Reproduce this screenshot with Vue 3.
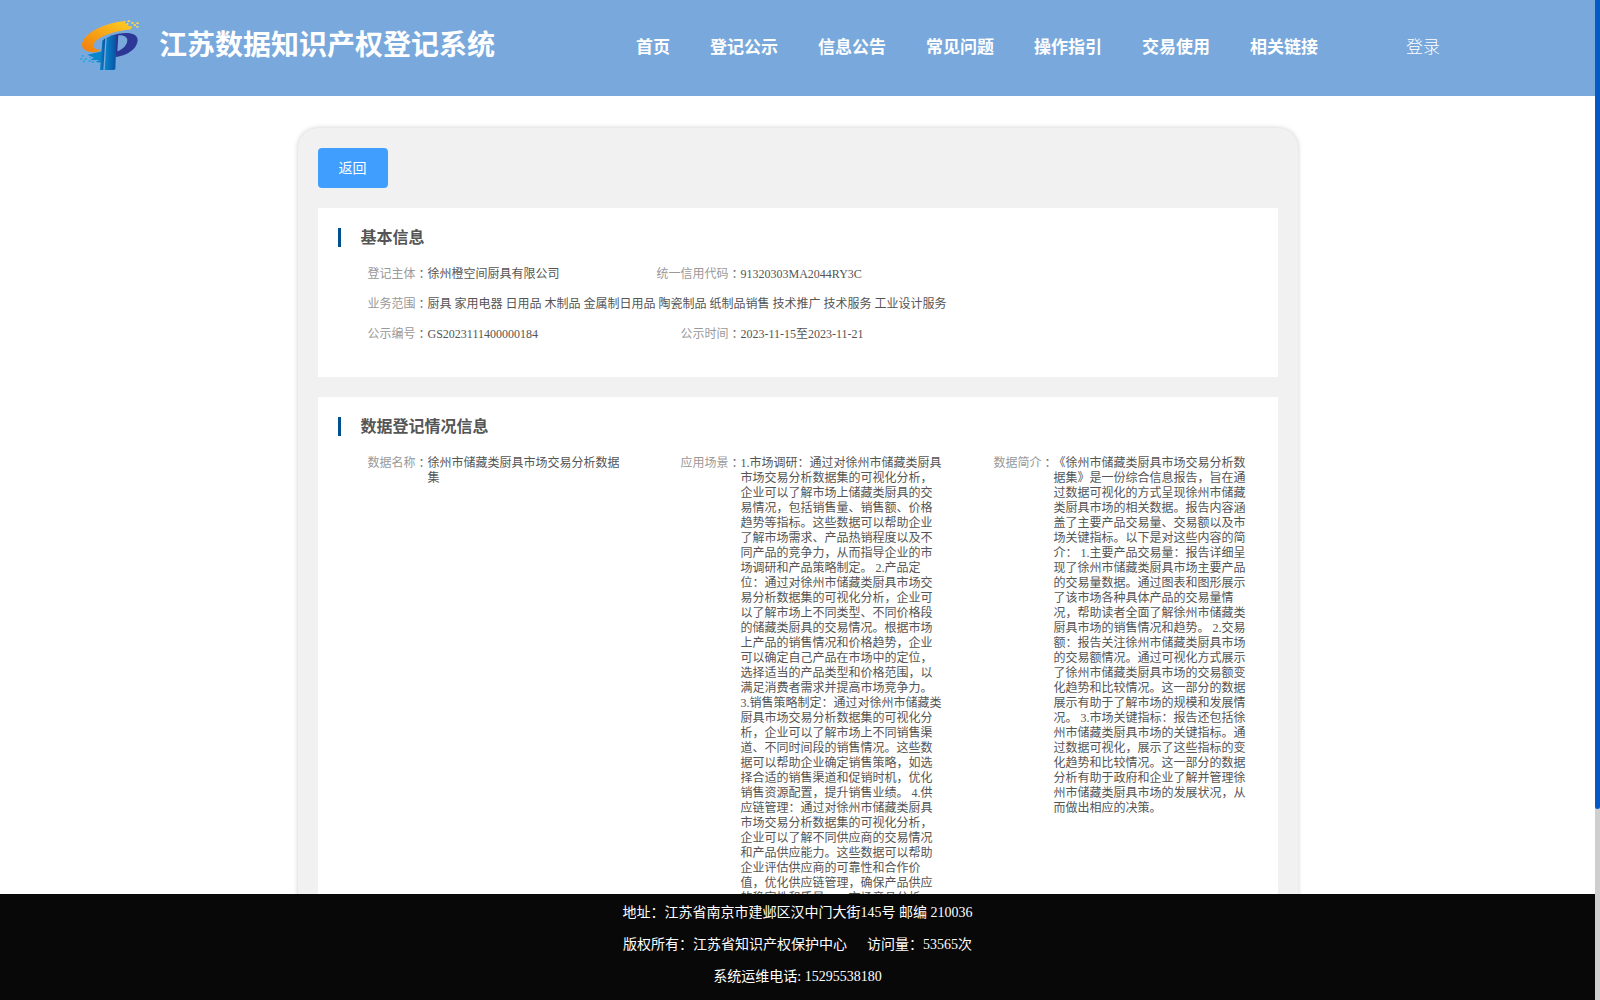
<template>
  <div class="page">
    <div class="view">
      <header class="header">
        <svg class="logo" viewBox="0 0 240 210">
          <defs>
            <linearGradient id="orange" x1="0" y1="1" x2="1" y2="0">
              <stop offset="0" stop-color="#f07c0c" />
              <stop offset="1" stop-color="#ffd024" />
            </linearGradient>
            <linearGradient id="blue" x1="0" y1="0" x2="1" y2="0">
              <stop offset="0" stop-color="#0a86cc" />
              <stop offset="1" stop-color="#0850a0" />
            </linearGradient>
          </defs>
          <path d="M166 33 C105 38 36 70 36 106 C37 122 60 130 84 125 L93 119 C76 121 68 112 72 102 C79 82 125 65 182 58 L188 50 L174 47 Z" fill="url(#orange)" />
          <path d="M52 134 L97 124 L97 158 L76 156 L88 150 L60 150 L72 143 Z" fill="#0a86cc" />
          <path d="M97 92 L106 84 L100 180 L90 180 Z" fill="url(#blue)" />
          <path d="M110 83 Q122 76 140 74 L136 176 Q135 180 130 180 L104 180 Z" fill="url(#blue)" />
          <path d="M120 78 C165 62 203 67 203 90 C202 118 168 138 137 141 L138 76 Z M145 76 L142 124 C160 118 172 104 172 90 C172 80 160 75 145 76 Z" fill="#2c3796" fill-rule="evenodd" />
          <path d="M173 31h7v5h-7z M184 36h7v5h-7z M191 43h7v5h-7z M199 37h7v5h-7z M168 39h7v5h-7z M199 48h6v5h-6z" fill="#ffd83c" />
          <path d="M166 37h5v4h-5z M180 42h5v4h-5z M190 34h4v3h-4z" fill="#79a9dc" />
          <path d="M35 135h6v5h-6z M31 145h6v5h-6z M44 145h7v5h-7z M39 152h6v5h-6z M55 151h7v5h-7z M65 153h7v5h-7z M58 140h6v4h-6z" fill="#2ba5e3" />
        </svg>
        <h1 class="site-name">江苏数据知识产权登记系统</h1>
        <nav class="nav">
          <a v-for="item in menus" :key="item" class="nav-item">{{ item }}</a>
        </nav>
        <a class="login">登录</a>
      </header>

      <main class="main">
        <div class="card">
          <button class="back">返回</button>
          <section v-for="section in sections" :key="section.title" class="section">
            <h2 class="section-title">{{ section.title }}</h2>
            <div class="fields">
              <div v-for="field in section.fields" :key="field.label" class="field" :class="field.size">
                <span class="label">{{ field.label }}<span class="colon">：</span></span>
                <span class="value">{{ field.value }}</span>
              </div>
            </div>
          </section>
        </div>
      </main>

      <footer class="footer">
        <p>地址：江苏省南京市建邺区汉中门大街145号 邮编 210036</p>
        <p>版权所有：江苏省知识产权保护中心<span class="visits">访问量：53565次</span></p>
        <p>系统运维电话: 15295538180</p>
      </footer>
    </div>
    <div class="scrollbar"><div class="thumb"></div></div>
  </div>
</template>

<script setup>
const menus = ['首页', '登记公示', '信息公告', '常见问题', '操作指引', '交易使用', '相关链接']

const sections = [
  {
    title: '基本信息',
    fields: [
      { label: '登记主体', value: '徐州橙空间厨具有限公司' },
      { label: '统一信用代码', value: '91320303MA2044RY3C', size: 'double' },
      { label: '业务范围', value: '厨具 家用电器 日用品 木制品 金属制日用品 陶瓷制品 纸制品销售 技术推广 技术服务 工业设计服务', size: 'full' },
      { label: '公示编号', value: 'GS2023111400000184' },
      { label: '公示时间', value: '2023-11-15至2023-11-21' }
    ]
  },
  {
    title: '数据登记情况信息',
    fields: [
      { label: '数据名称', value: '徐州市储藏类厨具市场交易分析数据集' },
      {
        label: '应用场景',
        value: '1.市场调研：通过对徐州市储藏类厨具市场交易分析数据集的可视化分析，企业可以了解市场上储藏类厨具的交易情况，包括销售量、销售额、价格趋势等指标。这些数据可以帮助企业了解市场需求、产品热销程度以及不同产品的竞争力，从而指导企业的市场调研和产品策略制定。 2.产品定位：通过对徐州市储藏类厨具市场交易分析数据集的可视化分析，企业可以了解市场上不同类型、不同价格段的储藏类厨具的交易情况。根据市场上产品的销售情况和价格趋势，企业可以确定自己产品在市场中的定位，选择适当的产品类型和价格范围，以满足消费者需求并提高市场竞争力。 3.销售策略制定：通过对徐州市储藏类厨具市场交易分析数据集的可视化分析，企业可以了解市场上不同销售渠道、不同时间段的销售情况。这些数据可以帮助企业确定销售策略，如选择合适的销售渠道和促销时机，优化销售资源配置，提升销售业绩。 4.供应链管理：通过对徐州市储藏类厨具市场交易分析数据集的可视化分析，企业可以了解不同供应商的交易情况和产品供应能力。这些数据可以帮助企业评估供应商的可靠性和合作价值，优化供应链管理，确保产品供应的稳定性和质量。 5.市场竞品分析'
      },
      {
        label: '数据简介',
        value: '《徐州市储藏类厨具市场交易分析数据集》是一份综合信息报告，旨在通过数据可视化的方式呈现徐州市储藏类厨具市场的相关数据。报告内容涵盖了主要产品交易量、交易额以及市场关键指标。以下是对这些内容的简介： 1.主要产品交易量：报告详细呈现了徐州市储藏类厨具市场主要产品的交易量数据。通过图表和图形展示了该市场各种具体产品的交易量情况，帮助读者全面了解徐州市储藏类厨具市场的销售情况和趋势。 2.交易额：报告关注徐州市储藏类厨具市场的交易额情况。通过可视化方式展示了徐州市储藏类厨具市场的交易额变化趋势和比较情况。这一部分的数据展示有助于了解市场的规模和发展情况。 3.市场关键指标：报告还包括徐州市储藏类厨具市场的关键指标。通过数据可视化，展示了这些指标的变化趋势和比较情况。这一部分的数据分析有助于政府和企业了解并管理徐州市储藏类厨具市场的发展状况，从而做出相应的决策。'
      }
    ]
  }
]
</script>

<style>
body {
  margin: 0;
  overflow: hidden;
}
</style>

<style scoped>
.page {
  display: flex;
  height: 100vh;
  font-family: "Liberation Serif", "Noto Sans CJK SC", serif;
  text-spacing-trim: space-all;
  background: #fff;
}

.view {
  flex: 1;
  min-width: 0;
  display: flex;
  flex-direction: column;
}

.header {
  display: flex;
  align-items: center;
  flex: none;
  height: 96px;
  box-sizing: border-box;
  padding-left: 70px;
  background: #79a9dc;
  color: #fff;
}

.logo {
  width: 80px;
  height: 70px;
  margin-top: -6px;
}

.site-name {
  width: 336px;
  margin: -4px 0 0 9px;
  font-size: 28px;
  line-height: 40px;
  white-space: nowrap;
}

.nav {
  display: flex;
  gap: 40px;
  margin-left: 141px;
  font-size: 17px;
  font-weight: bold;
}

.login {
  margin-left: 88px;
  font-size: 17px;
  font-weight: 300;
}

.nav-item,
.login {
  white-space: nowrap;
  line-height: 24px;
}

.main {
  flex: 1;
  min-height: 0;
  overflow: hidden;
}

.card {
  width: 1000px;
  height: 1200px;
  box-sizing: border-box;
  margin: 32px auto 0;
  padding: 20px;
  border-radius: 20px;
  background: #f1f1f1;
  box-shadow: 0 0 5px rgba(0, 0, 0, 0.2);
}

.back {
  display: block;
  width: 70px;
  height: 40px;
  padding: 0 0 2px;
  border: none;
  border-radius: 4px;
  background: #409eff;
  color: #fff;
  font-family: inherit;
  font-size: 14px;
}

.section {
  margin-top: 20px;
  padding: 20px 0 28px 20px;
  background: #fff;
}

.section:nth-child(2) {
  height: 121px;
}

.section-title {
  margin: 0;
  padding-left: 20px;
  border-left: 3px solid #00508f;
  height: 19px;
  line-height: 20px;
  font-size: 16px;
  color: #555;
}

.fields {
  display: grid;
  grid-template-columns: repeat(3, 313px);
  row-gap: 15px;
  margin: 20px 0 0 10px;
  font-size: 12px;
  line-height: 15px;
}

.field {
  display: flex;
  padding-right: 30px;
}

.double {
  grid-column: span 2;
}

.full {
  grid-column: span 3;
}

.label {
  flex: none;
  width: 80px;
  display: flex;
  justify-content: flex-end;
  white-space: nowrap;
  color: #999;
}

/* 冒号居中显示 */
.colon {
  font-family: "Noto Sans CJK JP", sans-serif;
  margin-top: -1px;
  color: #666;
}

.value {
  flex: 1;
  min-width: 0;
  color: #555;
}

.footer {
  flex: none;
  height: 106px;
  box-sizing: border-box;
  padding-top: 3px;
  background: #080808;
  color: #fff;
  font-size: 14px;
  text-align: center;
}

.footer p {
  margin: 0;
  line-height: 32px;
}

.visits {
  margin-left: 20px;
}

.scrollbar {
  flex: none;
  width: 5px;
  background: #cfcfcf;
}

.thumb {
  height: 809px;
  border-radius: 0 0 3px 3px;
  background: #0459c4;
}
</style>
